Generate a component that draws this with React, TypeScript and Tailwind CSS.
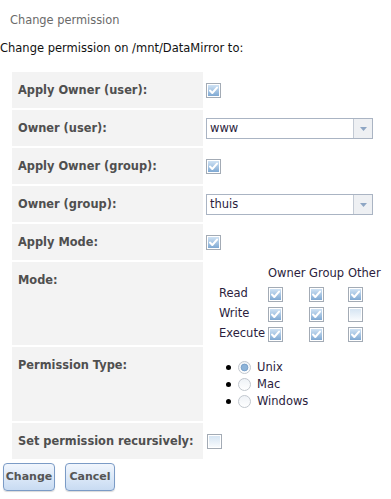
import React from "react";

function Check({ checked }: { checked: boolean }) {
  return (
    <svg width="15" height="15" viewBox="0 0 15 15" className="block">
      <defs>
        <linearGradient id="cbOn" x1="0" y1="0" x2="0" y2="1">
          <stop offset="0" stopColor="#cfe2f4" />
          <stop offset="1" stopColor="#7fa9d3" />
        </linearGradient>
        <linearGradient id="cbOff" x1="0" y1="0" x2="0" y2="1">
          <stop offset="0" stopColor="#d6e5f3" />
          <stop offset="1" stopColor="#f7fafd" />
        </linearGradient>
      </defs>
      <rect x="0.5" y="0.5" width="14" height="14" fill="#fff" stroke="#a3abb5" />
      <rect x="2" y="2" width="11" height="11" fill={checked ? "url(#cbOn)" : "url(#cbOff)"} />
      {checked && (
        <path d="M4 7.5 L6.3 10 L11 4.6" fill="none" stroke="#fff" strokeWidth="2" strokeLinecap="round" strokeLinejoin="round" />
      )}
    </svg>
  );
}

function Radio({ checked }: { checked: boolean }) {
  return (
    <svg width="13" height="13" viewBox="0 0 13 13" className="block">
      <defs>
        <linearGradient id="rdBg" x1="0" y1="0" x2="0" y2="1">
          <stop offset="0" stopColor="#eef2f6" />
          <stop offset="1" stopColor="#ffffff" />
        </linearGradient>
      </defs>
      <circle cx="6.5" cy="6.5" r="6" fill="url(#rdBg)" stroke="#c0c6cd" />
      {checked && <circle cx="6.5" cy="6.5" r="3.4" fill="#8db3d8" stroke="#6f98c4" strokeWidth="0.8" />}
    </svg>
  );
}

function Select({ value }: { value: string }) {
  return (
    <div className="flex h-[21px] w-[167px] border border-[#aab4c3] bg-white">
      <div className="flex-1 pl-[3px] leading-[19px] text-[#2b1d3d]">{value}</div>
      <div className="flex w-[19px] items-center justify-center border-l border-[#c3cad4] bg-[#eef0f3]">
        <svg width="7" height="4" viewBox="0 0 7 4">
          <path d="M0 0 L7 0 L3.5 4 Z" fill="#8ea6c4" />
        </svg>
      </div>
    </div>
  );
}

const labelCls =
  "w-[191px] bg-[#f3f3f3] pl-[6px] pt-[12px] align-top font-bold text-[11.4px] text-[#4f4f4f] leading-[13px]";

export default function App() {
  return (
    <div className="h-[499px] w-[391px] bg-white font-['DejaVu_Sans',sans-serif] text-[11.5px]">
      <div className="flex h-[40px] items-center pl-[10px] pt-[1px] text-[11.4px] text-[#6a6a6a]">Change permission</div>
      <div className="flex h-[18px] items-center text-[#111]">Change permission on /mnt/DataMirror to:</div>
      <table className="ml-[10px] mt-[12px] border-separate border-spacing-[2px]">
        <tbody>
          <tr className="h-[36px]">
            <td className={labelCls}>Apply Owner (user):</td>
            <td className="w-[178px] pl-[1px] pt-[11px] align-top">
              <Check checked />
            </td>
          </tr>
          <tr className="h-[36px]">
            <td className={labelCls}>Owner (user):</td>
            <td className="pl-[1px] pt-[8px] align-top">
              <Select value="www" />
            </td>
          </tr>
          <tr className="h-[36px]">
            <td className={labelCls}>Apply Owner (group):</td>
            <td className="pl-[1px] pt-[11px] align-top">
              <Check checked />
            </td>
          </tr>
          <tr className="h-[36px]">
            <td className={labelCls}>Owner (group):</td>
            <td className="pl-[1px] pt-[8px] align-top">
              <Select value="thuis" />
            </td>
          </tr>
          <tr className="h-[36px]">
            <td className={labelCls}>Apply Mode:</td>
            <td className="pl-[1px] pt-[11px] align-top">
              <Check checked />
            </td>
          </tr>
          <tr className="h-[83px]">
            <td className={labelCls}>Mode:</td>
            <td className="pl-[14px] pt-[2px] align-top text-[#2b1d3d]">
              <div className="grid grid-cols-[49px_41px_39px_36px] auto-rows-[20px] items-center">
                <div />
                <div>Owner</div>
                <div>Group</div>
                <div>Other</div>
                <div>Read</div>
                <Check checked />
                <Check checked />
                <Check checked />
                <div>Write</div>
                <Check checked />
                <Check checked />
                <Check checked={false} />
                <div>Execute</div>
                <Check checked />
                <Check checked />
                <Check checked />
              </div>
            </td>
          </tr>
          <tr className="h-[74px]">
            <td className={labelCls}>Permission Type:</td>
            <td className="pl-[21px] pt-[12px] align-top text-[#2b1d3d]">
              {[
                ["Unix", true],
                ["Mac", false],
                ["Windows", false],
              ].map(([name, on]) => (
                <div key={name as string} className="flex h-[17px] items-center">
                  <span className="mr-[7px] h-[5px] w-[5px] rounded-full bg-black" />
                  <Radio checked={on as boolean} />
                  <span className="ml-[6px]">{name as string}</span>
                </div>
              ))}
            </td>
          </tr>
          <tr className="h-[36px]">
            <td className={labelCls}>Set permission recursively:</td>
            <td className="pl-[2px] pt-[11px] align-top">
              <Check checked={false} />
            </td>
          </tr>
        </tbody>
      </table>
      <div className="ml-[3px] mt-[2px] flex gap-[10px]">
        <button className="h-[28px] w-[52px] rounded-[4px] border border-[#7b9bc6] bg-gradient-to-b from-[#f1f6fd] to-[#c8dbf2] text-[11px] font-bold text-[#555] shadow-[0_1px_1px_rgba(0,0,0,0.15)]">
          Change
        </button>
        <button className="h-[28px] w-[50px] rounded-[4px] border border-[#7b9bc6] bg-gradient-to-b from-[#f1f6fd] to-[#c8dbf2] text-[11px] font-bold text-[#555] shadow-[0_1px_1px_rgba(0,0,0,0.15)]">
          Cancel
        </button>
      </div>
    </div>
  );
}
